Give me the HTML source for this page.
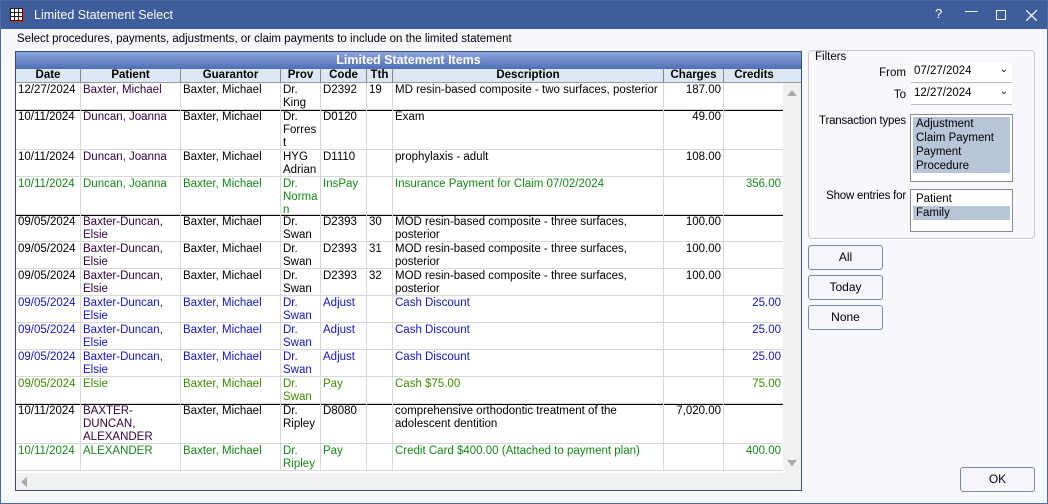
<!DOCTYPE html>
<html><head><meta charset="utf-8"><style>
*{box-sizing:border-box;margin:0;padding:0}
body{width:1048px;height:504px;overflow:hidden;background:#fff;font-family:"Liberation Sans",sans-serif;font-size:11.5px;color:#000;position:relative}
.win{position:absolute;left:0;top:0;width:1048px;height:504px;border:1px solid #4a6aa8;background:#f6f8fc}
.title{position:absolute;left:0;top:0;width:1046px;height:28px;background:#3d5d9c;color:#fff;font-size:12.5px}
.title .t{position:absolute;left:33px;top:7px}
.title .b{position:absolute;top:5px;font-size:13px}
.abs{position:absolute}
.grid{position:absolute;left:14px;top:50px;width:787px;height:440px;border:1px solid #37507f;background:#fff;overflow:hidden}
.gt{position:absolute;left:0;top:0;width:785px;height:17px;background:linear-gradient(#8ea4dc,#4f6fb6);color:#fff;font-weight:bold;font-size:12.5px;text-align:center;line-height:17px}
.gh{position:absolute;left:0;top:17px;width:785px;height:14px;background:#dde6f3;border-bottom:1px solid #999}
.gh div{position:absolute;top:0;height:13px;font-weight:bold;text-align:center;line-height:13px;border-right:1px solid #888}
.row{position:absolute;left:0;width:768px;border-bottom:1px solid #d8d8d8}
.row div{position:absolute;top:0;bottom:0;padding:1px 2px;line-height:13px;border-right:1px solid #d8d8d8;overflow:hidden;word-break:break-word}
.r{text-align:right}
.blk{box-shadow:inset 0 1px 0 #000}
.bl{color:#1414c8}.gr{color:#148a14}.ol{color:#3c8c00}.pm{color:#300040}
.vs{position:absolute;left:767px;top:31px;width:18px;height:390px;background:#f0f0f0}
.hs{position:absolute;left:0;top:421px;width:785px;height:17px;background:#f0f0f0}
.btn{position:absolute;width:75px;height:25px;border:1px solid #7a8aa8;border-radius:3px;background:#f4f6fa;text-align:center;line-height:23px;font-size:12px}
.lb{position:absolute;background:#fff;border:1px solid #8a8a8a}
.lb div{height:14px;line-height:14px;padding-left:3px}
.sel{background:#b8c4d8}
.dd{position:absolute;width:101px;height:20px;background:#fff;border-bottom:1px solid #bbb;padding:2px 3px}
.lab{position:absolute;text-align:right;width:100px}
</style></head><body><div class="win">
<div class="title">
<svg class="abs" style="left:9px;top:7px" width="14" height="14"><rect x="0" y="0" width="14" height="14" fill="#222"/><g fill="#fff"><rect x="1" y="1" width="3" height="3"/><rect x="5" y="1" width="3" height="3"/><rect x="9" y="1" width="3" height="3"/><rect x="1" y="5" width="3" height="3"/><rect x="5" y="5" width="3" height="3"/><rect x="9" y="5" width="3" height="3"/><rect x="1" y="9" width="3" height="3"/><rect x="5" y="9" width="3" height="3"/><rect x="9" y="9" width="3" height="3"/></g><path d="M0 13.5H14M13.5 0V14" stroke="#e02020"/></svg>
<span class="t">Limited Statement Select</span>
<span class="b" style="left:934px">?</span>
<span class="b" style="left:964px;top:2px">—</span>
<span class="abs" style="left:995px;top:9px;width:10px;height:10px;border:1px solid #fff"></span>
<svg class="abs" style="left:1025px;top:9px" width="11" height="11"><path d="M0 0L11 11M11 0L0 11" stroke="#fff" stroke-width="1.2"/></svg>
</div>
<div class="abs" style="left:16px;top:32px">Select procedures, payments, adjustments, or claim payments to include on the limited statement</div>
<div class="grid">
<div class="gt">Limited Statement Items</div>
<div class="gh">
<div style="left:0;width:65px">Date</div><div style="left:65px;width:100px">Patient</div><div style="left:165px;width:100px">Guarantor</div><div style="left:265px;width:40px">Prov</div><div style="left:305px;width:46px">Code</div><div style="left:351px;width:26px">Tth</div><div style="left:377px;width:271px">Description</div><div style="left:648px;width:60px">Charges</div><div style="left:708px;width:60px;border:none">Credits</div>
</div>
<div id="rows"></div>
<div class="vs"><svg class="abs" style="left:4px;top:6px" width="10" height="7"><path d="M0 7L5 1L10 7Z" fill="#aaa"/></svg><svg class="abs" style="left:4px;top:377px" width="10" height="7"><path d="M0 0L5 6L10 0Z" fill="#aaa"/></svg></div>
<div class="hs"><svg class="abs" style="left:4px;top:4px" width="7" height="10"><path d="M7 0L1 5L7 10Z" fill="#aaa"/></svg></div>
</div>
<div class="abs" style="left:807px;top:49px;width:227px;height:189px;border:1px solid #c8c8c8;border-radius:4px"></div>
<div class="abs" style="left:814px;top:50px">Filters</div>
<div class="lab" style="left:805px;top:66px">From</div>
<div class="dd" style="left:910px;top:62px">07/27/2024<span class="abs" style="right:4px;top:1px;font-size:10px">&#8964;</span></div>
<div class="lab" style="left:805px;top:88px">To</div>
<div class="dd" style="left:910px;top:84px">12/27/2024<span class="abs" style="right:4px;top:1px;font-size:10px">&#8964;</span></div>
<div class="lab" style="left:805px;top:114px;letter-spacing:-0.2px">Transaction types</div>
<div class="lb" style="left:909px;top:113px;width:103px;height:68px;padding:2px"><div class="sel">Adjustment</div><div class="sel">Claim Payment</div><div class="sel">Payment</div><div class="sel">Procedure</div></div>
<div class="lab" style="left:805px;top:189px;letter-spacing:-0.2px">Show entries for</div>
<div class="lb" style="left:909px;top:188px;width:103px;height:43px;padding:2px"><div>Patient</div><div class="sel">Family</div></div>
<div class="btn" style="left:807px;top:244px">All</div>
<div class="btn" style="left:807px;top:274px">Today</div>
<div class="btn" style="left:807px;top:304px">None</div>
<div class="btn" style="left:959px;top:466px">OK</div>
</div>
<script>
var L=[0,65,165,265,305,351,377,648,708,768];
var R=[
[0,27,"","12/27/2024","Baxter, Michael","Baxter, Michael","Dr. King","D2392","19","MD resin-based composite - two surfaces, posterior","187.00",""],
[27,40,"blk","10/11/2024","Duncan, Joanna","Baxter, Michael","Dr. Forres t","D0120",""," Exam","49.00",""],
[67,27,"","10/11/2024","Duncan, Joanna","Baxter, Michael","HYG Adrian","D1110",""," prophylaxis - adult","108.00",""],
[94,38,"gr","10/11/2024","Duncan, Joanna","Baxter, Michael","Dr. Norma n","InsPay","","Insurance Payment for Claim 07/02/2024","","356.00"],
[132,27,"blk","09/05/2024","Baxter-Duncan, Elsie","Baxter, Michael","Dr. Swan","D2393","30","MOD resin-based composite - three surfaces, posterior","100.00",""],
[159,27,"","09/05/2024","Baxter-Duncan, Elsie","Baxter, Michael","Dr. Swan","D2393","31","MOD resin-based composite - three surfaces, posterior","100.00",""],
[186,27,"","09/05/2024","Baxter-Duncan, Elsie","Baxter, Michael","Dr. Swan","D2393","32","MOD resin-based composite - three surfaces, posterior","100.00",""],
[213,27,"bl","09/05/2024","Baxter-Duncan, Elsie","Baxter, Michael","Dr. Swan","Adjust","","Cash Discount","","25.00"],
[240,27,"bl","09/05/2024","Baxter-Duncan, Elsie","Baxter, Michael","Dr. Swan","Adjust","","Cash Discount","","25.00"],
[267,27,"bl","09/05/2024","Baxter-Duncan, Elsie","Baxter, Michael","Dr. Swan","Adjust","","Cash Discount","","25.00"],
[294,27,"ol","09/05/2024","Elsie","Baxter, Michael","Dr. Swan","Pay","","Cash $75.00","","75.00"],
[321,40,"blk","10/11/2024","BAXTER-DUNCAN, ALEXANDER","Baxter, Michael","Dr. Ripley","D8080",""," comprehensive orthodontic treatment of the adolescent dentition","7,020.00",""],
[361,27,"gr","10/11/2024","ALEXANDER","Baxter, Michael","Dr. Ripley","Pay","","Credit Card $400.00 (Attached to payment plan)","","400.00"]
];
var h="";
R.forEach(function(r){
var pl=(r[2]==''||r[2]=='blk');
h+='<div class="row '+r[2]+'" style="top:'+(31+r[0])+'px;height:'+r[1]+'px">';
for(var i=0;i<9;i++){h+='<div class="'+(i>=7?'r':'')+(i==1&&pl?' pm':'')+'" style="left:'+L[i]+'px;width:'+(L[i+1]-L[i])+'px">'+r[3+i]+'</div>';}
h+='</div>';});
document.getElementById("rows").innerHTML=h;
</script>
</body></html>
